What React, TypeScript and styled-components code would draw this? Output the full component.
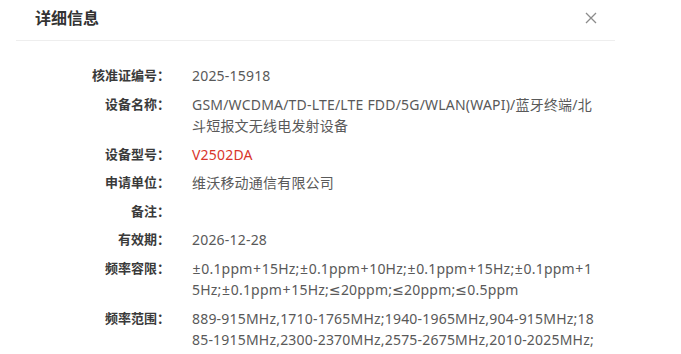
import styled, { createGlobalStyle } from "styled-components"

const GlobalStyle = createGlobalStyle`
    html, body {
        margin: 0;
        padding: 0;
        background: #fff;
    }
    body {
        font-family: "Noto Sans", "DejaVu Sans", "Noto Sans CJK SC", sans-serif;
        overflow: hidden;
    }
`

interface InfoItem {
    label: string
    value: string
    highlight?: boolean
}

const items: InfoItem[] = [
    { label: "核准证编号：", value: "2025-15918" },
    {
        label: "设备名称：",
        value: "GSM/WCDMA/TD-LTE/LTE FDD/5G/WLAN(WAPI)/蓝牙终端/北斗短报文无线电发射设备",
    },
    { label: "设备型号：", value: "V2502DA", highlight: true },
    { label: "申请单位：", value: "维沃移动通信有限公司" },
    { label: "备注：", value: "" },
    { label: "有效期：", value: "2026-12-28" },
    {
        label: "频率容限：",
        value: "±0.1ppm+15Hz;±0.1ppm+10Hz;±0.1ppm+15Hz;±0.1ppm+15Hz;±0.1ppm+15Hz;≤20ppm;≤20ppm;≤0.5ppm",
    },
    {
        label: "频率范围：",
        value: "889-915MHz,1710-1765MHz;1940-1965MHz,904-915MHz;1885-1915MHz,2300-2370MHz,2575-2675MHz,2010-2025MHz;1880-1965MHz,1710-1785MHz,880-915MHz,934-935MHz;2555-2655MHz",
    },
]

// the + and ± signs are a little wider in the original font
function renderValue(text: string) {
    return text.split(/([+±])/).map((part, i) =>
        part === "+" || part === "±" ? <Sym key={i}>{part}</Sym> : part
    )
}

function CloseIcon() {
    return (
        <svg width="12" height="12" viewBox="0 0 12 12" fill="none">
            <path d="M1 1L11 11M11 1L1 11" stroke="#8c8c8c" strokeWidth="1.3" />
        </svg>
    )
}

export default function App() {
    return (
        <>
            <GlobalStyle />
            <Dialog>
                <Header>
                    <Title>详细信息</Title>
                    <CloseButton aria-label="关闭">
                        <CloseIcon />
                    </CloseButton>
                </Header>
                <Body>
                    {items.map((item) => (
                        <Row key={item.label}>
                            <Label>{item.label}</Label>
                            <Value $highlight={item.highlight}>{renderValue(item.value)}</Value>
                        </Row>
                    ))}
                </Body>
            </Dialog>
        </>
    )
}

const Dialog = styled.div`
    width: 599px;
    margin-left: 16px;
    background: #fff;
`

const Header = styled.div`
    height: 41px;
    box-sizing: border-box;
    padding: 7px 18px 0 19px;
    display: flex;
    justify-content: space-between;
    align-items: flex-start;
    border-bottom: 1px solid #eeeeee;
`

const Title = styled.div`
    font-size: 16px;
    line-height: 22px;
    font-weight: 700;
    color: #333;
`

const CloseButton = styled.button`
    border: none;
    background: none;
    padding: 0;
    margin-top: 5px;
    width: 12px;
    height: 12px;
    display: flex;
    cursor: pointer;
`

const Body = styled.div`
    padding-top: 24px;
    display: flex;
    flex-direction: column;
    gap: 7px;
`

const Row = styled.div`
    display: grid;
    grid-template-columns: 154px 403px;
    column-gap: 22px;
    line-height: 21.5px;
`

const Label = styled.div`
    text-align: right;
    font-size: 13px;
    font-weight: 700;
    color: #3a3a3a;
`

const Value = styled.div<{ $highlight?: boolean }>`
    font-size: 14px;
    letter-spacing: 0.2px;
    color: ${({ $highlight }) => ($highlight ? "#d8362c" : "#595959")};
    word-break: break-all;
    min-height: 21.5px;
`

const Sym = styled.span`
    padding: 0 0.5px;
`
